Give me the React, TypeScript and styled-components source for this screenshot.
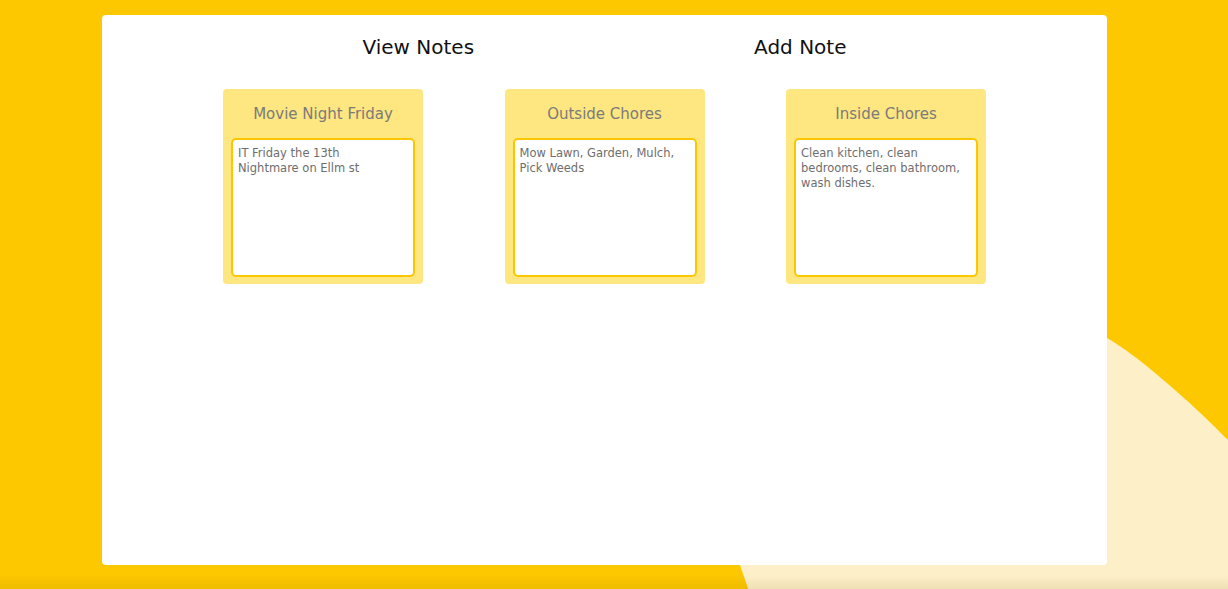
import React from "react";
import styled, { createGlobalStyle } from "styled-components";

const GlobalStyle = createGlobalStyle`
  html, body {
    margin: 0;
    padding: 0;
    background: #fdc800;
    font-family: "DejaVu Sans", "Noto Sans", sans-serif;
    overflow: hidden;
  }
  * { box-sizing: border-box; }
`;

const Backdrop = styled.svg`
  position: fixed;
  left: 0;
  top: 0;
  width: 1228px;
  height: 589px;
  z-index: 0;
  pointer-events: none;
`;

const BottomShade = styled.div`
  position: fixed;
  left: 0;
  right: 0;
  bottom: 0;
  height: 14px;
  background: linear-gradient(to top, rgba(120, 80, 0, 0.1), rgba(120, 80, 0, 0));
  pointer-events: none;
  z-index: 2;
`;

const Page = styled.div`
  position: relative;
  z-index: 1;
  width: 100%;
  height: 589px;
  padding-top: 15px;
`;

const Panel = styled.main`
  width: 1005px;
  height: 550px;
  margin-left: 102px;
  background: #ffffff;
  border-radius: 4px;
  padding-top: 20px;
  display: flex;
  flex-direction: column;
  align-items: center;
`;

const Nav = styled.nav`
  display: flex;
  gap: 280px;
  height: 24px;
  align-items: center;
`;

const NavLink = styled.a`
  font-size: 20px;
  line-height: 24px;
  color: #111111;
  text-decoration: none;
  cursor: pointer;
`;

const CardRow = styled.section`
  margin-top: 30px;
  display: flex;
  gap: 81.5px;
  justify-content: center;
`;

const Card = styled.article`
  width: 200px;
  height: 195px;
  background: #fee680;
  border-radius: 4px;
  padding: 8px 8px 7px 8px;
  display: flex;
  flex-direction: column;
`;

const CardTitle = styled.h3`
  margin: 0;
  padding-top: 7px;
  height: 41px;
  font-size: 15px;
  line-height: 20px;
  font-weight: 400;
  color: #7b7b7b;
  text-align: center;
`;

const NoteBody = styled.textarea`
  width: 184px;
  height: 139px;
  border: 2px solid #fdc700;
  border-radius: 5px;
  background: #ffffff;
  padding: 6px 5px 5px 5px;
  resize: none;
  font-family: "DejaVu Sans", "Noto Sans", sans-serif;
  font-size: 11.5px;
  line-height: 15px;
  color: #6e6e6e;
  outline: none;
  overflow: hidden;
`;

const notes = [
  { title: "Movie Night Friday", body: "IT Friday the 13th\nNightmare on Ellm st" },
  { title: "Outside Chores", body: "Mow Lawn, Garden, Mulch, Pick Weeds" },
  { title: "Inside Chores", body: "Clean kitchen, clean bedrooms, clean bathroom, wash dishes." },
];

export default function App() {
  return (
    <>
      <GlobalStyle />
      <Backdrop viewBox="0 0 1228 589" preserveAspectRatio="none">
        <path
          d="M 752 600 L 740 565 C 698 452 934 238 1107 338 C 1142 358 1200 411 1228 440 L 1300 520 L 1300 620 Z"
          fill="#fdf0c9"
        />
      </Backdrop>
      <Page>
        <Panel>
          <Nav>
            <NavLink>View Notes</NavLink>
            <NavLink>Add Note</NavLink>
          </Nav>
          <CardRow>
            {notes.map((n) => (
              <Card key={n.title}>
                <CardTitle>{n.title}</CardTitle>
                <NoteBody defaultValue={n.body} readOnly />
              </Card>
            ))}
          </CardRow>
        </Panel>
      </Page>
      <BottomShade />
    </>
  );
}
